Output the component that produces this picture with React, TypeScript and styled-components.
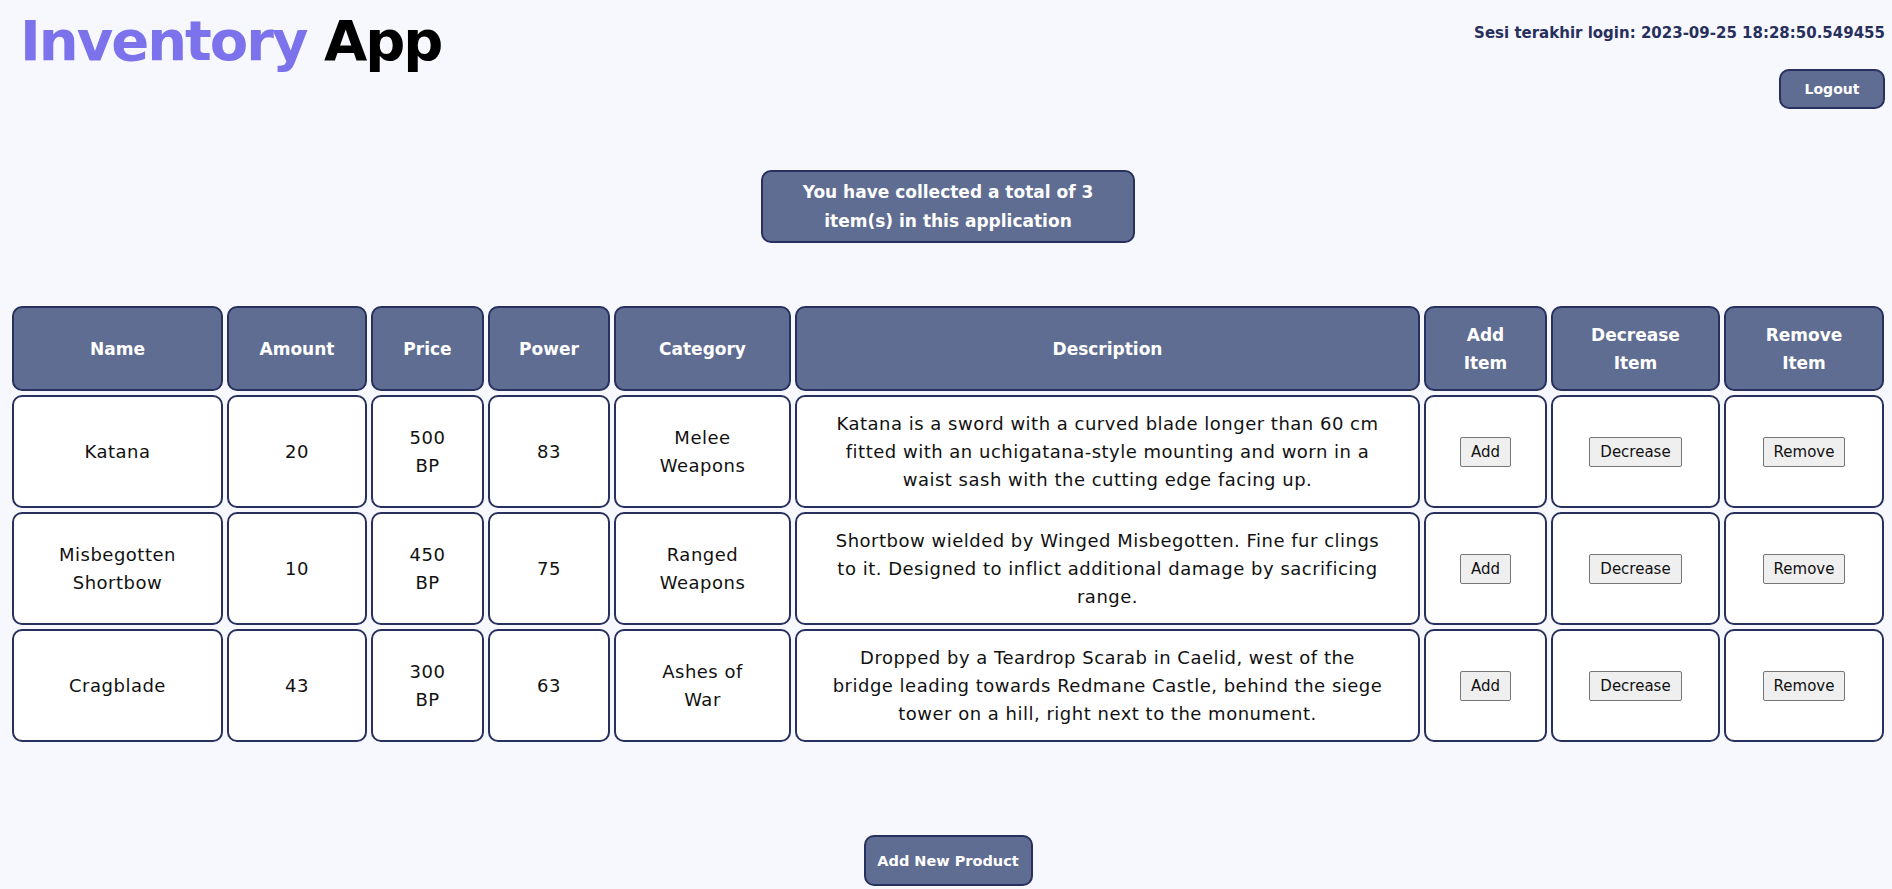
import React from "react";
import styled, { createGlobalStyle } from "styled-components";

const GlobalStyle = createGlobalStyle`
  html, body { margin: 0; padding: 0; }
  body {
    background: #f7f8fd;
    font-family: "DejaVu Sans", "Noto Sans", sans-serif;
    color: #111;
  }
`;

const Page = styled.div`
  padding: 0 4px 0 8px;
  display: flex;
  flex-direction: column;
`;

const TopBar = styled.header`
  display: flex;
  justify-content: space-between;
  align-items: flex-start;
  padding-right: 3px;
`;

const Title = styled.h1`
  margin: 2px 0 0 12px;
  font-size: 56px;
  line-height: 78px;
  font-weight: 700;
  letter-spacing: -2px;
  color: #000;
`;

const Accent = styled.span`
  color: #7b72ec;
`;

const SessionBox = styled.div`
  display: flex;
  flex-direction: column;
  align-items: flex-end;
  padding-top: 20px;
`;

const SessionText = styled.p`
  margin: 0;
  font-size: 15px;
  line-height: 27px;
  font-weight: 700;
  color: #272f5c;
`;

const NavyButton = styled.button<{ $w: number; $h: number; $fs: number }>`
  width: ${(p) => p.$w}px;
  height: ${(p) => p.$h}px;
  background: #5f6d92;
  border: 2px solid #27305e;
  border-radius: 10px;
  color: #fff;
  font-family: "DejaVu Sans", sans-serif;
  font-weight: 700;
  font-size: ${(p) => p.$fs}px;
  padding: 0;
  cursor: pointer;
`;

const LogoutButton = styled(NavyButton)`
  margin-top: 22px;
`;

const Summary = styled.div`
  align-self: center;
  width: 374px;
  height: 73px;
  box-sizing: border-box;
  margin: 61px 0 0 0;
  background: #5f6d92;
  border: 2px solid #27305e;
  border-radius: 10px;
  color: #fff;
  font-weight: 700;
  font-size: 17px;
  line-height: 29px;
  text-align: center;
  display: flex;
  align-items: center;
  justify-content: center;
  padding: 0 30px;
`;

const Table = styled.table`
  margin-top: 59px;
  width: 100%;
  table-layout: fixed;
  border-collapse: separate;
  border-spacing: 4px;
`;

const HeadCell = styled.th`
  height: 85px;
  box-sizing: border-box;
  background: #5f6d92;
  border: 2px solid #27305e;
  border-radius: 10px;
  color: #fff;
  font-weight: 700;
  font-size: 17px;
  line-height: 28px;
  padding: 0 20px;
  text-align: center;
`;

const BodyCell = styled.td`
  height: 113px;
  box-sizing: border-box;
  background: #fff;
  border: 2px solid #27305e;
  border-radius: 10px;
  font-size: 18px;
  letter-spacing: 0.5px;
  line-height: 28px;
  padding: 0 30px;
  text-align: center;
  color: #111;
`;

const ActionButton = styled.button`
  height: 30px;
  padding: 0 10px;
  font-family: "DejaVu Sans", sans-serif;
  font-size: 15px;
  color: #111;
  background: #efefef;
  border: 1px solid #767676;
  border-radius: 2px;
  cursor: pointer;
`;

const NewProductRow = styled.div`
  display: flex;
  justify-content: center;
  margin-top: 89px;
`;

const columns: { label: string; width: number }[] = [
  { label: "Name", width: 211 },
  { label: "Amount", width: 140 },
  { label: "Price", width: 113 },
  { label: "Power", width: 122 },
  { label: "Category", width: 177 },
  { label: "Description", width: 625 },
  { label: "Add Item", width: 123 },
  { label: "Decrease Item", width: 169 },
  { label: "Remove Item", width: 160 },
];

const items = [
  {
    name: "Katana",
    amount: 20,
    price: "500 BP",
    power: 83,
    category: "Melee Weapons",
    description:
      "Katana is a sword with a curved blade longer than 60 cm fitted with an uchigatana-style mounting and worn in a waist sash with the cutting edge facing up.",
  },
  {
    name: "Misbegotten Shortbow",
    amount: 10,
    price: "450 BP",
    power: 75,
    category: "Ranged Weapons",
    description:
      "Shortbow wielded by Winged Misbegotten. Fine fur clings to it. Designed to inflict additional damage by sacrificing range.",
  },
  {
    name: "Cragblade",
    amount: 43,
    price: "300 BP",
    power: 63,
    category: "Ashes of War",
    description:
      "Dropped by a Teardrop Scarab in Caelid, west of the bridge leading towards Redmane Castle, behind the siege tower on a hill, right next to the monument.",
  },
];

export default function App() {
  return (
    <>
      <GlobalStyle />
      <Page>
        <TopBar>
          <Title>
            <Accent>Inventory</Accent> App
          </Title>
          <SessionBox>
            <SessionText>Sesi terakhir login: 2023-09-25 18:28:50.549455</SessionText>
            <LogoutButton $w={106} $h={40} $fs={14}>
              Logout
            </LogoutButton>
          </SessionBox>
        </TopBar>

        <Summary>You have collected a total of 3 item(s) in this application</Summary>

        <Table>
          <colgroup>
            {columns.map((c, i) => (
              <col key={i} style={{ width: c.width }} />
            ))}
          </colgroup>
          <thead>
            <tr>
              {columns.map((c, i) => (
                <HeadCell key={i}>{c.label}</HeadCell>
              ))}
            </tr>
          </thead>
          <tbody>
            {items.map((it) => (
              <tr key={it.name}>
                <BodyCell>{it.name}</BodyCell>
                <BodyCell>{it.amount}</BodyCell>
                <BodyCell>{it.price}</BodyCell>
                <BodyCell>{it.power}</BodyCell>
                <BodyCell>{it.category}</BodyCell>
                <BodyCell>{it.description}</BodyCell>
                <BodyCell>
                  <ActionButton>Add</ActionButton>
                </BodyCell>
                <BodyCell>
                  <ActionButton>Decrease</ActionButton>
                </BodyCell>
                <BodyCell>
                  <ActionButton>Remove</ActionButton>
                </BodyCell>
              </tr>
            ))}
          </tbody>
        </Table>

        <NewProductRow>
          <NavyButton $w={169} $h={51} $fs={14.5}>
            Add New Product
          </NavyButton>
        </NewProductRow>
      </Page>
    </>
  );
}
